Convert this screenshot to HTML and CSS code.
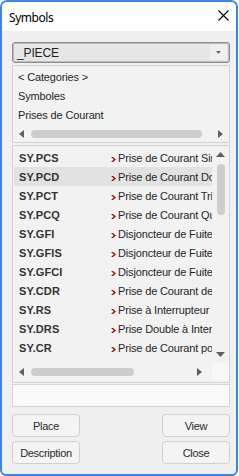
FILE: index.html
```html
<!DOCTYPE html>
<html>
<head>
<meta charset="utf-8">
<link rel="stylesheet" href="styles.css">
</head>
<body>
<div class="window">
  <div class="titlebar">
    <span class="title">Symbols</span>
    <svg class="close" width="11" height="11" viewBox="0 0 11 11"><path d="M0.5 0.5 L10.5 10.5 M10.5 0.5 L0.5 10.5" stroke="#000" stroke-width="1.1" fill="none"/></svg>
  </div>
  <div class="content">
    <div class="combo">
      <span class="combo-text">_PIECE</span>
      <span class="combo-btn"><svg width="5" height="3" viewBox="0 0 5 3"><polygon points="0,0 5,0 2.5,3" fill="#6a6a6a"/></svg></span>
    </div>

    <div class="listbox cats">
      <div class="cat-items">
        <div class="item">&lt; Categories &gt;</div>
        <div class="item">Symboles</div>
        <div class="item">Prises de Courant</div>
      </div>
      <div class="hscroll cats-h">
        <span class="arrow"><svg width="5" height="8" viewBox="0 0 5 8"><polygon points="5,0 5,8 0,4" fill="#606060"/></svg></span>
        <span class="track"><span class="thumb cats-thumb"></span></span>
        <span class="arrow"><svg width="5" height="8" viewBox="0 0 5 8"><polygon points="0,0 0,8 5,4" fill="#606060"/></svg></span>
      </div>
    </div>

    <div class="listbox syms">
      <div class="sym-main">
        <div class="rows">
          <div class="row"><span class="code">SY.PCS</span><svg class="mark" width="5" height="5" viewBox="0 0 5 5"><polygon points="0,0 2,0 5,2.5 2,5 0,5 2.8,2.5" fill="#9a1010"/></svg><span class="desc">Prise de Courant Simple</span></div>
          <div class="row sel"><span class="code">SY.PCD</span><svg class="mark" width="5" height="5" viewBox="0 0 5 5"><polygon points="0,0 2,0 5,2.5 2,5 0,5 2.8,2.5" fill="#9a1010"/></svg><span class="desc">Prise de Courant Double</span></div>
          <div class="row"><span class="code">SY.PCT</span><svg class="mark" width="5" height="5" viewBox="0 0 5 5"><polygon points="0,0 2,0 5,2.5 2,5 0,5 2.8,2.5" fill="#9a1010"/></svg><span class="desc">Prise de Courant Triple</span></div>
          <div class="row"><span class="code">SY.PCQ</span><svg class="mark" width="5" height="5" viewBox="0 0 5 5"><polygon points="0,0 2,0 5,2.5 2,5 0,5 2.8,2.5" fill="#9a1010"/></svg><span class="desc">Prise de Courant Quadruple</span></div>
          <div class="row"><span class="code">SY.GFI</span><svg class="mark" width="5" height="5" viewBox="0 0 5 5"><polygon points="0,0 2,0 5,2.5 2,5 0,5 2.8,2.5" fill="#9a1010"/></svg><span class="desc">Disjoncteur de Fuite à la Terre</span></div>
          <div class="row"><span class="code">SY.GFIS</span><svg class="mark" width="5" height="5" viewBox="0 0 5 5"><polygon points="0,0 2,0 5,2.5 2,5 0,5 2.8,2.5" fill="#9a1010"/></svg><span class="desc">Disjoncteur de Fuite Simple</span></div>
          <div class="row"><span class="code">SY.GFCI</span><svg class="mark" width="5" height="5" viewBox="0 0 5 5"><polygon points="0,0 2,0 5,2.5 2,5 0,5 2.8,2.5" fill="#9a1010"/></svg><span class="desc">Disjoncteur de Fuite Double</span></div>
          <div class="row"><span class="code">SY.CDR</span><svg class="mark" width="5" height="5" viewBox="0 0 5 5"><polygon points="0,0 2,0 5,2.5 2,5 0,5 2.8,2.5" fill="#9a1010"/></svg><span class="desc">Prise de Courant de Rasoir</span></div>
          <div class="row"><span class="code">SY.RS</span><svg class="mark" width="5" height="5" viewBox="0 0 5 5"><polygon points="0,0 2,0 5,2.5 2,5 0,5 2.8,2.5" fill="#9a1010"/></svg><span class="desc">Prise à Interrupteur</span></div>
          <div class="row"><span class="code">SY.DRS</span><svg class="mark" width="5" height="5" viewBox="0 0 5 5"><polygon points="0,0 2,0 5,2.5 2,5 0,5 2.8,2.5" fill="#9a1010"/></svg><span class="desc">Prise Double à Interrupteur</span></div>
          <div class="row"><span class="code">SY.CR</span><svg class="mark" width="5" height="5" viewBox="0 0 5 5"><polygon points="0,0 2,0 5,2.5 2,5 0,5 2.8,2.5" fill="#9a1010"/></svg><span class="desc">Prise de Courant pour Cuisinière</span></div>
          <div class="row"><span class="code">SY.DRDS</span><svg class="mark" width="5" height="5" viewBox="0 0 5 5"><polygon points="0,0 2,0 5,2.5 2,5 0,5 2.8,2.5" fill="#9a1010"/></svg><span class="desc">Prise Double à Sécurité</span></div>
        </div>
        <div class="vscroll">
          <span class="varrow"><svg width="9" height="5" viewBox="0 0 9 5"><polygon points="0,5 9,5 4.5,0" fill="#606060"/></svg></span>
          <span class="vtrack"><span class="vthumb"></span></span>
          <span class="varrow"><svg width="9" height="5" viewBox="0 0 9 5"><polygon points="0,0 9,0 4.5,5" fill="#606060"/></svg></span>
        </div>
      </div>
      <div class="sym-bottom">
        <div class="hscroll syms-h">
          <span class="arrow"><svg width="5" height="8" viewBox="0 0 5 8"><polygon points="5,0 5,8 0,4" fill="#606060"/></svg></span>
          <span class="track"><span class="thumb syms-thumb"></span></span>
          <span class="arrow"><svg width="5" height="8" viewBox="0 0 5 8"><polygon points="0,0 0,8 5,4" fill="#606060"/></svg></span>
        </div>
        <div class="corner"></div>
      </div>
    </div>

    <div class="textbox"></div>

    <div class="buttons">
      <button class="btn">Place</button>
      <button class="btn">View</button>
      <button class="btn">Description</button>
      <button class="btn">Close</button>
    </div>
  </div>
</div>
</body>
</html>
```

FILE: styles.css
```css
html, body {
  margin: 0;
  padding: 0;
  background: #ffffff;
}

.window {
  box-sizing: border-box;
  width: 238px;
  height: 476px;
  border: 2px solid #3a86e6;
  border-radius: 7px 7px 6px 6px;
  background: #f0f0f0;
  display: flex;
  flex-direction: column;
  overflow: hidden;
  font-family: "Liberation Sans", Arial, sans-serif;
  font-size: 11px;
  letter-spacing: -0.15px;
  color: #262626;
}

.titlebar {
  height: 29px;
  background: #ffffff;
  display: flex;
  align-items: center;
  justify-content: space-between;
  padding: 0 7px 0 7px;
  flex: none;
}

.title {
  font-family: "Noto Sans", "Open Sans", sans-serif;
  font-size: 12px;
  letter-spacing: -0.45px;
  color: #000;
  margin-top: 2px;
}

.close {
  display: block;
  margin-top: -2px;
}

.content {
  flex: 1;
  display: flex;
  flex-direction: column;
  padding: 11px 6px 0 10px;
}

.combo {
  box-sizing: border-box;
  height: 21px;
  border: 1px solid #8c8c8c;
  box-shadow: inset 0 0 0 1px #bdbdbd;
  border-radius: 3px;
  background: #e6e6e6;
  display: flex;
  align-items: stretch;
  padding: 2px;
}

.combo-text {
  flex: 1;
  display: flex;
  align-items: center;
  padding-left: 2px;
  font-size: 12px;
  color: #1e1e1e;
}

.combo-btn {
  width: 17px;
  background: #f0f0f0;
  display: flex;
  align-items: center;
  justify-content: center;
}

.combo-btn svg {
  display: block;
}

.listbox {
  box-sizing: border-box;
  border: 1px solid #d4d4d4;
  background: #f2f2f2;
  display: flex;
  flex-direction: column;
}

.cats {
  height: 78px;
  margin-top: 2px;
}

.cat-items {
  padding: 2px 0 0 5px;
}

.item {
  height: 19px;
  line-height: 19px;
  white-space: nowrap;
  color: #262626;
}

.hscroll {
  height: 17px;
  display: flex;
  align-items: center;
}

.arrow {
  width: 17px;
  height: 17px;
  display: flex;
  align-items: center;
  justify-content: center;
  flex: none;
}

.arrow svg {
  display: block;
}

.track {
  flex: 1;
  height: 8px;
  display: flex;
  margin: 0 1px;
}

.thumb {
  display: block;
  height: 8px;
  border-radius: 4px;
  background: #cdcdcd;
}

.cats-thumb {
  width: 171px;
}

.syms {
  height: 238px;
  margin-top: 2px;
  padding-bottom: 1px;
}

.sym-main {
  height: 217px;
  display: flex;
}

.rows {
  flex: 1;
  overflow: hidden;
  padding: 1px 0 0 1px;
}

.row {
  height: 19px;
  display: flex;
  align-items: center;
  white-space: nowrap;
  padding-left: 5px;
}

.row:first-child {
  margin-top: 1px;
}

.row.sel {
  background: #e2e2e2;
}

.code {
  width: 92px;
  flex: none;
  font-weight: bold;
  color: #333333;
  letter-spacing: 0.1px;
}

.mark {
  display: block;
  flex: none;
  margin: 4px 2px 0 0;
}

.desc {
  color: #262626;
}

.vscroll {
  width: 17px;
  flex: none;
  display: flex;
  flex-direction: column;
  align-items: center;
}

.varrow {
  height: 17px;
  width: 17px;
  display: flex;
  align-items: center;
  justify-content: center;
  flex: none;
}

.varrow svg {
  display: block;
}

.vtrack {
  flex: 1;
  display: flex;
  flex-direction: column;
  align-items: center;
  padding-top: 1px;
}

.vthumb {
  display: block;
  width: 8px;
  height: 51px;
  border-radius: 4px;
  background: #cdcdcd;
}

.sym-bottom {
  display: flex;
  height: 17px;
}

.syms-h {
  flex: 1;
}

.syms-h .arrow:last-child {
  width: 15px;
  justify-content: flex-start;
}

.syms-thumb {
  width: 103px;
}

.corner {
  width: 17px;
  flex: none;
  background: #f8f8f8;
}

.textbox {
  box-sizing: border-box;
  height: 23px;
  margin-top: 1px;
  border: 1px solid #d4d4d4;
  background: #fafafa;
}

.buttons {
  margin-top: 7px;
  display: grid;
  grid-template-columns: 68px 68px;
  justify-content: space-between;
  row-gap: 4px;
}

.btn {
  box-sizing: border-box;
  height: 23px;
  margin: 0;
  padding: 0;
  border: 1px solid #cfcfcf;
  border-radius: 4px;
  background: #f4f4f4;
  font-family: "Liberation Sans", Arial, sans-serif;
  font-size: 11px;
  letter-spacing: -0.3px;
  color: #2a2a2a;
}
```
